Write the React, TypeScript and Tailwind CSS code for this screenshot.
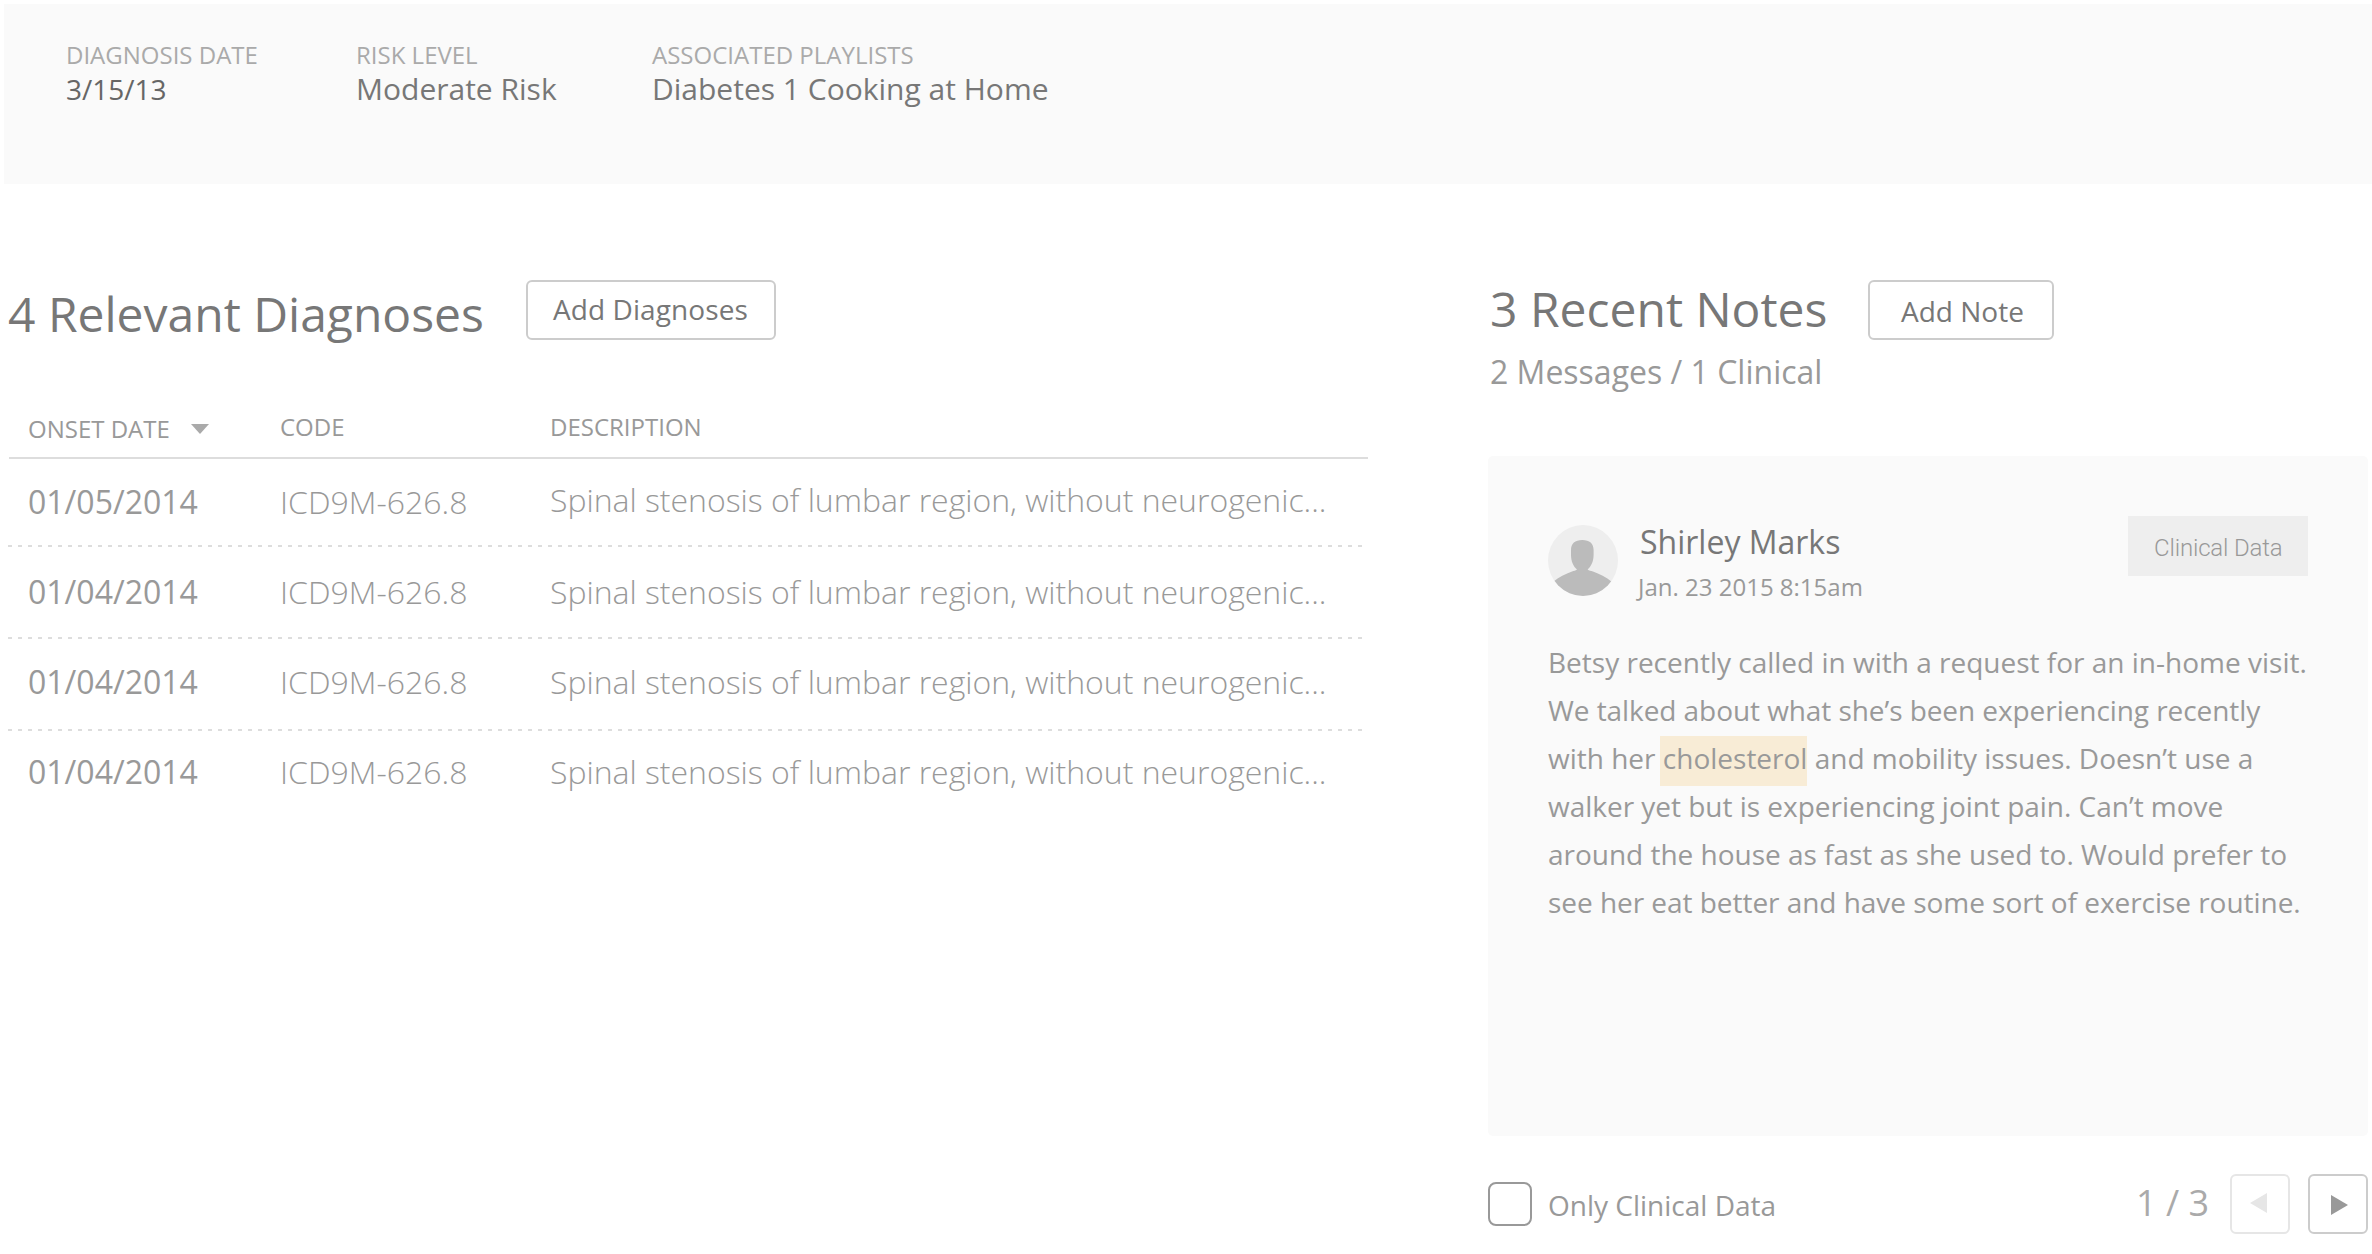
type Row = {
  date: string;
  code: string;
  description: string;
  size: string;
  descOffset: string;
};

const description = 'Spinal stenosis of lumbar region, without neurogenic...';

const rows: Row[] = [
  { date: '01/05/2014', code: 'ICD9M-626.8', description, size: 'h-[86px] pt-[21px]', descOffset: '-mt-0.5' },
  { date: '01/04/2014', code: 'ICD9M-626.8', description, size: 'h-[90px] pt-[23px]', descOffset: '' },
  { date: '01/04/2014', code: 'ICD9M-626.8', description, size: 'h-[90px] pt-[21px]', descOffset: '' },
  { date: '01/04/2014', code: 'ICD9M-626.8', description, size: 'h-[90px] pt-[19px]', descOffset: '' },
];

function Fact({ label, value, valueClass }: { label: string; value: string; valueClass: string }) {
  return (
    <div className="whitespace-nowrap">
      <div className="text-[24px] leading-[33px] text-[#aaa]">{label}</div>
      <div className={valueClass}>{value}</div>
    </div>
  );
}

function PatientHeader() {
  return (
    <header className="mt-1 ml-1 grid h-[180px] grid-cols-[290px_296px_1fr] bg-[#fafafa] pt-[34px] pl-[62px]">
      <Fact label="DIAGNOSIS DATE" value="3/15/13" valueClass="-mt-px text-[28px] leading-[38px] text-[#666]" />
      <Fact label="RISK LEVEL" value="Moderate Risk" valueClass="-mt-[3px] text-[30px] leading-[41px] text-[#777]" />
      <Fact
        label="ASSOCIATED PLAYLISTS"
        value="Diabetes 1 Cooking at Home"
        valueClass="-mt-[3px] text-[30px] leading-[41px] text-[#777]"
      />
    </header>
  );
}

function DashedRule() {
  return (
    <div className="h-0.5 w-[1356px] bg-[repeating-linear-gradient(90deg,#ddd_0px,#ddd_4px,transparent_4px,transparent_10px)]" />
  );
}

function Diagnoses() {
  return (
    <section className="w-[1360px] pt-[96px]">
      <div className="flex h-[66px] items-start">
        <h2 className="mt-px w-[518px] text-[48px] leading-[65px] text-[#777]">4 Relevant Diagnoses</h2>
        <button className="flex h-[60px] w-[250px] rounded-md border-2 border-[#ccc] pt-2 pl-[25px] text-[28px] leading-[38px] tracking-[0.08px] text-[#777]">
          Add Diagnoses
        </button>
      </div>
      <div className="mt-[62px] ml-px grid h-[51px] grid-cols-[252px_270px_1fr] border-b-2 border-[#ddd] pt-0.5 pl-[19px] text-[24px] leading-[33px] text-[#999]">
        <div className="mt-0.5 flex">
          ONSET DATE
          <svg className="mt-3 ml-[21px] h-[10px] w-[18px]" viewBox="0 0 18 10">
            <path d="M0 0H18L9 10Z" fill="#aaa" />
          </svg>
        </div>
        <div>CODE</div>
        <div>DESCRIPTION</div>
      </div>
      {rows.map((row, i) => (
        <div key={i}>
          {i > 0 && <DashedRule />}
          <div
            className={`grid grid-cols-[252px_270px_1fr] pl-5 text-[32px] leading-[43px] whitespace-nowrap text-[#999] ${row.size}`}
          >
            <div>{row.date}</div>
            <div className="font-light">{row.code}</div>
            <div className={`font-light tracking-[-0.02px] ${row.descOffset}`}>{row.description}</div>
          </div>
        </div>
      ))}
    </section>
  );
}

function Avatar() {
  return (
    <svg className="h-[71px] w-[70px]" viewBox="0 0 70 71">
      <defs>
        <clipPath id="avatar-clip">
          <ellipse cx="35" cy="35.5" rx="35" ry="35.5" />
        </clipPath>
      </defs>
      <g clipPath="url(#avatar-clip)">
        <rect width="70" height="71" fill="#eee" />
        <path
          d="M34.3 15C27 15 23 18.5 23 25V30C23 36.5 25.5 41.5 29 44.6C27.5 45.7 26 45.9 24 46.5C17.5 48.8 11 52 5 57V71H64V57C58 52 51.5 48.8 45 46.5C43 45.9 41 45.7 39.6 44.6C43 41.5 45.6 36.5 45.6 30V25C45.6 18.5 41.6 15 34.3 15Z"
          fill="#bbb"
        />
      </g>
    </svg>
  );
}

function NoteCard() {
  return (
    <article className="mt-[63px] h-[680px] w-[880px] rounded-[5px] bg-[#fafafa] pt-[60px] pl-[60px]">
      <div className="flex h-[122px] items-start">
        <div className="mt-[9px]">
          <Avatar />
        </div>
        <div className="mt-1 ml-[22px] w-[488px]">
          <div className="text-[32px] leading-[43px] text-[#777]">Shirley Marks</div>
          <div className="-ml-0.5 pt-[7px] text-[24px] leading-[33px] text-[#999]">Jan. 23 2015 8:15am</div>
        </div>
        <div className="h-[60px] w-[180px] bg-[#eee] pt-[18px] pl-[26px] font-[Roboto,sans-serif] text-[24px] leading-[28px] font-light tracking-[-0.16px] text-[#999]">
          Clinical Data
        </div>
      </div>
      <p className="text-[28px] leading-[48px] whitespace-nowrap text-[#999]">
        Betsy recently called in with a request for an in-home visit.
        <br />
        <span className="tracking-[-0.07px]">We talked about what she’s been experiencing recently</span>
        <br />
        with her <mark className="-ml-[3px] bg-[#f8ecd6] pt-[3px] pb-[9px] pl-[3px] text-inherit">cholesterol</mark> and
        mobility issues. Doesn’t use a
        <br />
        <span className="tracking-[-0.02px]">walker yet but is experiencing joint pain. Can’t move</span>
        <br />
        <span className="tracking-[-0.02px]">around the house as fast as she used to. Would prefer to</span>
        <br />
        <span className="tracking-[-0.04px]">see her eat better and have some sort of exercise routine.</span>
      </p>
    </article>
  );
}

function Notes() {
  return (
    <section className="w-[884px] pt-[92px]">
      <div className="flex h-[65px] items-start">
        <h2 className="ml-0.5 w-[378px] text-[48px] leading-[65px] text-[#777]">3 Recent Notes</h2>
        <button className="mt-1 flex h-[60px] w-[186px] rounded-md border-2 border-[#ccc] pt-2.5 pl-[31px] text-[28px] leading-[38px] text-[#777]">
          Add Note
        </button>
      </div>
      <div className="mt-[9px] ml-0.5 text-[32px] leading-[43px] text-[#999]">2 Messages / 1 Clinical</div>
      <NoteCard />
      <div className="mt-[38px] flex h-[60px] items-start">
        <div className="mt-2 h-11 w-11 rounded-lg border-2 border-[#999] bg-white" />
        <div className="mt-3 ml-4 w-[588px] text-[28px] leading-[38px] text-[#999]">Only Clinical Data</div>
        <div className="mt-1 w-[94px] text-[36px] leading-[49px] text-[#aaa]">1 / 3</div>
        <button className="flex h-[60px] w-[60px] items-start rounded-md border-2 border-[#e6e6e6] pt-[17px] pl-[18px]">
          <svg className="h-5 w-[17px]" viewBox="0 0 17 20">
            <path d="M17 0V20L0 10Z" fill="#e6e6e6" />
          </svg>
        </button>
        <button className="ml-[18px] flex h-[60px] w-[60px] items-start rounded-md border-2 border-[#ccc] pt-[19px] pl-[21px]">
          <svg className="h-5 w-[17px]" viewBox="0 0 17 20">
            <path d="M0 0V20L17 10Z" fill="#999" />
          </svg>
        </button>
      </div>
    </section>
  );
}

export default function App() {
  return (
    <div className="flow-root h-[1254px] w-[2372px] overflow-hidden bg-white font-['Open_Sans',sans-serif]">
      <PatientHeader />
      <main className="flex justify-between pl-2">
        <Diagnoses />
        <Notes />
      </main>
    </div>
  );
}
